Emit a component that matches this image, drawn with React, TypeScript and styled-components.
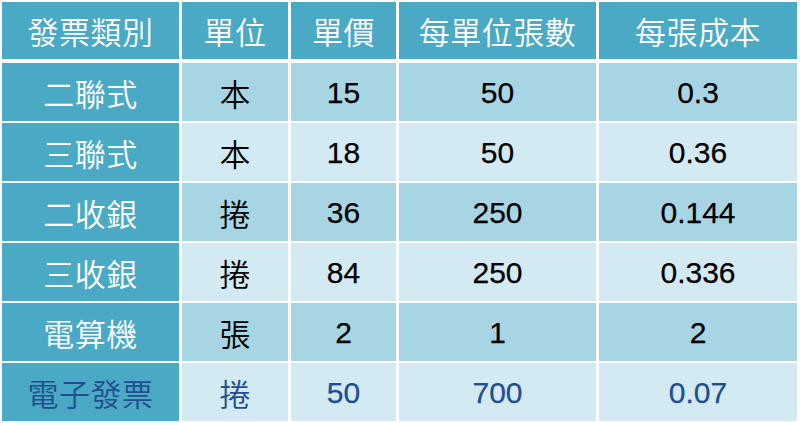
import React from 'react'
import styled, { createGlobalStyle } from 'styled-components'

const GlobalStyle = createGlobalStyle`
	html, body {
		margin: 0;
		padding: 0;
		background: #ffffff;
	}
	body {
		font-family: 'Liberation Sans', 'Noto Sans CJK TC', sans-serif;
	}
`

const colors = {
	teal: '#4aa9c5',
	mid: '#a8d5e3',
	light: '#d3eaf2',
	ink: '#000000',
	blue: '#1f4f8f',
}

const COLUMNS = '177px 106px 105px 197px 198px'

type Row = {
	kind: string
	unit: string
	price: string
	sheets: string
	cost: string
}

const rows: Row[] = [
	{ kind: '二聯式', unit: '本', price: '15', sheets: '50', cost: '0.3' },
	{ kind: '三聯式', unit: '本', price: '18', sheets: '50', cost: '0.36' },
	{ kind: '二收銀', unit: '捲', price: '36', sheets: '250', cost: '0.144' },
	{ kind: '三收銀', unit: '捲', price: '84', sheets: '250', cost: '0.336' },
	{ kind: '電算機', unit: '張', price: '2', sheets: '1', cost: '2' },
	{ kind: '電子發票', unit: '捲', price: '50', sheets: '700', cost: '0.07' },
]

const headers = ['發票類別', '單位', '單價', '每單位張數', '每張成本']

const Table = styled.div`
	display: flex;
	flex-direction: column;
	gap: 2px;
	padding: 2px;
	width: 800px;
	height: 423px;
	box-sizing: border-box;
`

const HeaderRow = styled.div`
	display: grid;
	grid-template-columns: ${COLUMNS};
	column-gap: 3px;
	height: 57px;
	margin-bottom: 2px;
`

const BodyRow = styled.div`
	display: grid;
	grid-template-columns: ${COLUMNS};
	column-gap: 3px;
	height: 58px;
`

const HeadCell = styled.div`
	display: flex;
	align-items: center;
	justify-content: center;
	background: ${colors.teal};
	color: #ffffff;
	font-family: 'Noto Sans CJK TC', sans-serif;
	font-size: 31px;
	font-weight: 350;
	letter-spacing: 0.5px;
`

const KindCell = styled(HeadCell)<{ $highlight?: boolean }>`
	color: ${({ $highlight }) => ($highlight ? colors.blue : '#ffffff')};
`

const Cell = styled.div<{ $shade: 'mid' | 'light'; $highlight?: boolean; $cjk?: boolean }>`
	display: flex;
	align-items: center;
	justify-content: center;
	background: ${({ $shade }) => colors[$shade]};
	color: ${({ $highlight }) => ($highlight ? colors.blue : colors.ink)};
	font-family: ${({ $cjk }) =>
		$cjk
			? "'Noto Sans CJK TC', sans-serif"
			: "'Liberation Sans', Arial, sans-serif"};
	font-size: ${({ $cjk }) => ($cjk ? '31px' : '30px')};
	font-weight: ${({ $cjk }) => ($cjk ? 350 : 400)};
	-webkit-text-stroke: ${({ $cjk }) => ($cjk ? '0' : '0.25px')};
	padding-top: ${({ $cjk }) => ($cjk ? '0' : '2px')};
`

export default function App() {
	return (
		<>
			<GlobalStyle />
			<Table>
				<HeaderRow>
					{headers.map((h) => (
						<HeadCell key={h}>{h}</HeadCell>
					))}
				</HeaderRow>
				{rows.map((r, i) => {
					const shade = i % 2 === 0 ? 'mid' : 'light'
					const hl = i === rows.length - 1
					return (
						<BodyRow key={r.kind}>
							<KindCell $highlight={hl}>{r.kind}</KindCell>
							<Cell $shade={shade} $highlight={hl} $cjk>
								{r.unit}
							</Cell>
							<Cell $shade={shade} $highlight={hl}>
								{r.price}
							</Cell>
							<Cell $shade={shade} $highlight={hl}>
								{r.sheets}
							</Cell>
							<Cell $shade={shade} $highlight={hl}>
								{r.cost}
							</Cell>
						</BodyRow>
					)
				})}
			</Table>
		</>
	)
}
